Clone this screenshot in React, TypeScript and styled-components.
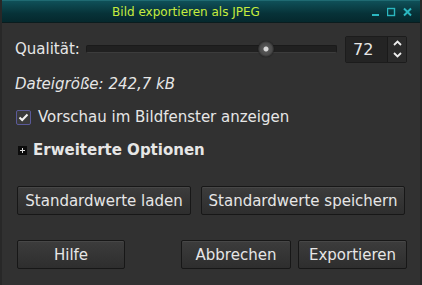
import { useState } from 'react'
import styled, { createGlobalStyle } from 'styled-components'

const Global = createGlobalStyle`
  html, body { margin: 0; padding: 0; background: #2f2f2f; }
  body { font-family: "DejaVu Sans", "Liberation Sans", sans-serif; }
`

const Window = styled.div`
  width: 422px;
  height: 285px;
  display: flex;
  flex-direction: column;
  background: #313131;
  border-left: 2px solid #282828;
  border-right: 2px solid #282828;
  box-sizing: border-box;
  overflow: hidden;
`

const TitleBar = styled.div`
  height: 23px;
  flex: none;
  margin: 0 -2px;
  display: flex;
  align-items: center;
  justify-content: center;
  position: relative;
  background: linear-gradient(#0f5058, #073238 60%, #05282d);
  border-top: 1px solid #1f6a72;
  border-bottom: 1px solid #0a1c1e;
  box-sizing: border-box;
`

const Title = styled.span`
  color: #c6ec3e;
  font-size: 12px;
  margin-left: -50px;
`

const WinButtons = styled.div`
  position: absolute;
  right: 10px;
  top: 6px;
  display: flex;
  gap: 7px;
`

const Body = styled.div`
  flex: 1;
  display: flex;
  flex-direction: column;
  padding: 12px 13px 0 13px;
  color: #e6e6e6;
  font-size: 15px;
`

const QualityRow = styled.div`
  display: flex;
  align-items: center;
  height: 28px;
`

const Label = styled.span`
  margin-right: 6px;
`

const Groove = styled.div`
  flex: 1;
  height: 6px;
  background: #202020;
  border: 1px solid #1a1a1a;
  border-bottom-color: #3c3c3c;
  border-radius: 2px;
  position: relative;
  margin-right: 8px;
`

const Knob = styled.div`
  position: absolute;
  top: 50%;
  width: 16px;
  height: 16px;
  margin: -8px 0 0 -8px;
  border-radius: 50%;
  background: radial-gradient(circle, #d8d8d8 0 2px, #555 3px, #4a4a4a 6px, #2a2a2a 8px);
  box-shadow: 0 0 1px #111;
`

const Spin = styled.div`
  width: 62px;
  height: 27px;
  display: flex;
  border: 1px solid #1c1c1c;
  background: #262626;
  border-radius: 2px;
  box-sizing: border-box;
`

const SpinValue = styled.div`
  flex: 1;
  display: flex;
  align-items: center;
  padding-left: 7px;
  font-size: 16px;
  background: #242424;
`

const SpinArrows = styled.div`
  width: 18px;
  display: flex;
  flex-direction: column;
  border-left: 1px solid #1a1a1a;
  background: #2b2b2b;
`

const Arrow = styled.div`
  flex: 1;
  display: flex;
  align-items: center;
  justify-content: center;
`

const Info = styled.div`
  font-style: italic;
  margin-top: 11px;
  height: 20px;
  display: flex;
  align-items: center;
`

const CheckRow = styled.label`
  display: flex;
  align-items: center;
  gap: 7px;
  margin-top: 13px;
  height: 20px;
`

const Box = styled.span`
  width: 15px;
  height: 15px;
  box-sizing: border-box;
  border: 1px solid #5a5a9a;
  background: #3a3a3a;
  border-radius: 2px;
  display: flex;
  align-items: center;
  justify-content: center;
  margin-left: 1px;
`

const Expander = styled.div`
  display: flex;
  align-items: center;
  gap: 6px;
  margin-top: 13px;
  height: 20px;
  font-weight: bold;
`

const Plus = styled.span`
  width: 9px;
  height: 9px;
  background: #0c0c0c;
  position: relative;
  margin-left: 3px;
  &::before, &::after {
    content: '';
    position: absolute;
    background: #ddd;
  }
  &::before { left: 2px; right: 2px; top: 4px; height: 1px; }
  &::after { top: 2px; bottom: 2px; left: 4px; width: 1px; }
`

const ButtonRow = styled.div<{ top: number; gap: number }>`
  display: flex;
  gap: ${p => p.gap}px;
  margin-top: ${p => p.top}px;
  padding-left: 2px;
`

const Button = styled.button<{ w: number }>`
  width: ${p => p.w}px;
  height: 29px;
  font-family: inherit;
  font-size: 15px;
  color: #e6e6e6;
  background: linear-gradient(#3c3c3c, #2e2e2e);
  border: 1px solid #171717;
  border-radius: 2px;
  box-shadow: inset 0 1px 0 #474747;
  padding: 0;
`

const Spacer = styled.div`
  flex: 1;
`

function Chevron({ up }: { up?: boolean }) {
  return (
    <svg width="9" height="6" viewBox="0 0 9 6">
      <path d={up ? 'M1 5 L4.5 1.5 L8 5' : 'M1 1 L4.5 4.5 L8 1'} stroke="#eee" strokeWidth="1.8" fill="none" />
    </svg>
  )
}

export default function App() {
  const [value] = useState(72)
  const [preview, setPreview] = useState(true)
  return (
    <Window>
      <Global />
      <TitleBar>
        <Title>Bild exportieren als JPEG</Title>
        <WinButtons>
          <svg width="8" height="10" viewBox="0 0 8 10"><rect x="0" y="7" width="7" height="2" fill="#2bb7c0" /></svg>
          <svg width="9" height="10" viewBox="0 0 9 10"><rect x="0.5" y="1.5" width="7" height="7" fill="none" stroke="#2bb7c0" strokeWidth="1.4" /></svg>
          <svg width="9" height="10" viewBox="0 0 9 10"><path d="M1 1.5 L8 8.5 M8 1.5 L1 8.5" stroke="#2bb7c0" strokeWidth="2" /></svg>
        </WinButtons>
      </TitleBar>
      <Body>
        <QualityRow>
          <Label>Qualität:</Label>
          <Groove>
            <Knob style={{ left: `${value}%` }} />
          </Groove>
          <Spin>
            <SpinValue>{value}</SpinValue>
            <SpinArrows>
              <Arrow><Chevron up /></Arrow>
              <Arrow><Chevron /></Arrow>
            </SpinArrows>
          </Spin>
        </QualityRow>
        <Info>Dateigröße: 242,7 kB</Info>
        <CheckRow onClick={() => setPreview(!preview)}>
          <Box>
            {preview && (
              <svg width="11" height="9" viewBox="0 0 11 9">
                <path d="M1.5 4.5 L4.2 7 L9.5 1.5" stroke="#f2f2f2" strokeWidth="2" fill="none" />
              </svg>
            )}
          </Box>
          Vorschau im Bildfenster anzeigen
        </CheckRow>
        <Expander>
          <Plus />
          Erweiterte Optionen
        </Expander>
        <ButtonRow top={26} gap={10}>
          <Button w={174}>Standardwerte laden</Button>
          <Button w={204}>Standardwerte speichern</Button>
        </ButtonRow>
        <ButtonRow top={25} gap={7}>
          <Button w={108}>Hilfe</Button>
          <Spacer />
          <Button w={110}>Abbrechen</Button>
          <Button w={109}>Exportieren</Button>
        </ButtonRow>
      </Body>
    </Window>
  )
}
